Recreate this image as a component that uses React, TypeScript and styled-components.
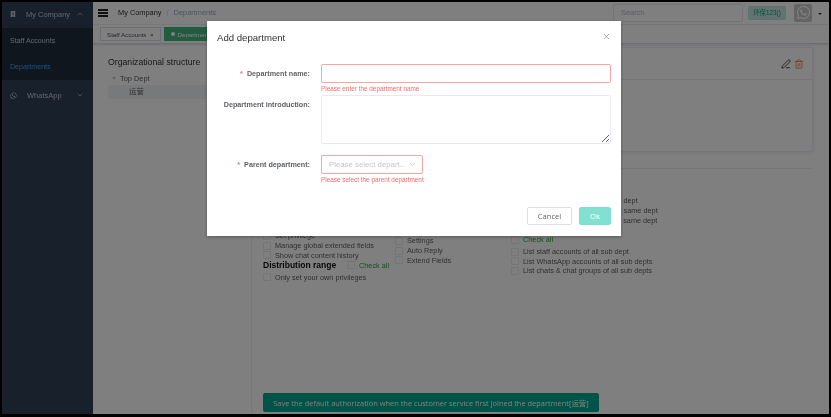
import React from 'react';
import styled, { createGlobalStyle } from 'styled-components';
import { ChevronDown, ChevronUp, PenLine, Trash2, X } from 'lucide-react';
import { FaWhatsapp, FaBuilding } from 'react-icons/fa';

const GlobalStyle = createGlobalStyle`
  html, body {
    margin: 0;
    height: 100%;
    background: #000;
    overflow: hidden;
  }
  #root {
    height: 100%;
  }
  * {
    box-sizing: border-box;
  }
`;

const Frame = styled.div`
  position: relative;
  margin: 2px 2px 0 2px;
  width: 827px;
  height: 412px;
  display: flex;
  background: #fff;
  font-family: 'Liberation Sans', Arial, sans-serif;
  color: #606266;
  overflow: hidden;
  filter: blur(0.5px);
`;

const Sidebar = styled.aside`
  width: 91px;
  flex: none;
  background: #304156;
  color: #bfcbd9;
  font-size: 7.5px;
`;

const MenuTitle = styled.div<{ $gap?: number }>`
  height: 26px;
  display: flex;
  align-items: center;
  padding: 0 9px 2px 8px;
  gap: 6px;
  margin-top: ${p => p.$gap || 0}px;
  white-space: nowrap;
  & > span {
    flex: 1;
    padding-left: 4px;
  }
`;

const SubMenu = styled.div`
  background: #1f2d3d;
`;

const SubItem = styled.div<{ $active?: boolean }>`
  height: 26px;
  line-height: 27px;
  padding-left: 8px;
  font-size: 7.1px;
  color: ${p => (p.$active ? '#409eff' : '#bfcbd9')};
`;

const Main = styled.div`
  flex: 1;
  min-width: 0;
  display: flex;
  flex-direction: column;
`;

const TopBar = styled.header`
  height: 23px;
  flex: none;
  display: flex;
  align-items: center;
  padding: 0 7px 1px 5px;
  border-bottom: 1px solid #eee;
`;

const Hamburger = styled.div`
  width: 10px;
  height: 8px;
  margin-right: 10px;
  border-top: 2px solid #222;
  border-bottom: 2px solid #222;
  position: relative;
  &::after {
    content: '';
    position: absolute;
    left: 0;
    right: 0;
    top: 1px;
    height: 2px;
    background: #222;
  }
`;

const Crumb = styled.span<{ $muted?: boolean }>`
  font-size: 7.4px;
  color: ${p => (p.$muted ? '#97a8be' : '#303133')};
`;

const CrumbSlash = styled.span`
  margin: 0 5px;
  font-size: 7.4px;
  color: #c0c4cc;
`;

const TopRight = styled.div`
  margin-left: auto;
  display: flex;
  align-items: center;
`;

const Search = styled.div`
  width: 130px;
  height: 18px;
  border: 1px solid #e4e7ed;
  border-radius: 2px;
  padding-left: 7px;
  line-height: 16px;
  font-size: 7.4px;
  color: #b8bcc4;
`;

const Badge = styled.div`
  width: 38px;
  height: 14px;
  margin-left: 5px;
  border-radius: 2px;
  background: #c8e6df;
  border: 1px solid #bfe3da;
  color: #00a58c;
  font-size: 6.4px;
  line-height: 12px;
  text-align: center;
  font-family: 'Liberation Sans', 'Noto Sans CJK SC', sans-serif;
`;

const Avatar = styled.div`
  width: 18px;
  height: 18px;
  margin-left: 8px;
  border-radius: 2px;
  background: #c8c8c8;
  color: #fff;
  display: flex;
  align-items: center;
  justify-content: center;
`;

const Caret = styled.div`
  margin-left: 6px;
  margin-top: 2px;
  border-left: 2px solid transparent;
  border-right: 2px solid transparent;
  border-top: 2px solid #333;
`;

const TagBar = styled.nav`
  height: 19px;
  flex: none;
  display: flex;
  align-items: center;
  gap: 3px;
  padding: 0 0 0 7px;
  border-bottom: 1px solid #d8dce5;
  box-shadow: 0 1px 2px rgba(0, 0, 0, 0.12);
`;

const Tag = styled.div<{ $active?: boolean }>`
  height: 14px;
  display: flex;
  align-items: center;
  gap: 3px;
  padding: 0 6px;
  font-size: 6.2px;
  border: 1px solid ${p => (p.$active ? '#42b983' : '#d8dce5')};
  background: ${p => (p.$active ? '#42b983' : '#fff')};
  color: ${p => (p.$active ? '#fff' : '#495060')};
  white-space: nowrap;
`;

const TagDot = styled.i`
  width: 4px;
  height: 4px;
  border-radius: 50%;
  background: #fff;
`;

const Content = styled.div`
  flex: 1;
  min-height: 0;
  display: flex;
  padding: 3px 16px 0 4px;
`;

const TreePanel = styled.section`
  width: 155px;
  flex: none;
  padding: 9px 0 0 11px;
  border-right: 1px solid #ebeef5;
`;

const TreeTitle = styled.h2`
  margin: 0 0 4px;
  font-size: 8.7px;
  line-height: 12px;
  font-weight: 400;
  color: #303133;
`;

const TreeNode = styled.div`
  display: flex;
  align-items: center;
  gap: 4px;
  height: 12px;
  padding-left: 4px;
  font-size: 7.4px;
`;

const TreeArrow = styled.i`
  border-left: 2px solid transparent;
  border-right: 2px solid transparent;
  border-top: 3px solid #c0c4cc;
`;

const TreeLeaf = styled.div`
  height: 14px;
  line-height: 14px;
  margin-top: 1px;
  padding-left: 21px;
  background: #f0f2f5;
  font-size: 7.4px;
  font-family: 'Liberation Sans', 'Noto Sans CJK SC', sans-serif;
`;

const RightPanel = styled.section`
  flex: 1;
  min-width: 0;
  display: flex;
  flex-direction: column;
`;

const InfoCard = styled.div`
  height: 105px;
  flex: none;
  border: 1px solid #ebeef5;
  box-shadow: 0 1px 4px rgba(0, 0, 0, 0.08);
`;

const InfoHead = styled.div`
  height: 32px;
  display: flex;
  align-items: center;
  justify-content: flex-end;
  gap: 3px;
  padding-right: 8px;
  border-bottom: 1px solid #ebeef5;
`;

const Privileges = styled.div`
  margin-top: 16px;
  border-top: 1px solid #ebeef5;
  padding: 27px 0 0 11px;
  display: grid;
  grid-template-columns: 132px 116px 1fr;
  font-size: 7.3px;
  color: #606266;
`;

const Column = styled.div<{ $top: number }>`
  padding-top: ${p => p.$top}px;
`;

const CheckRow = styled.label<{ $gap?: number }>`
  height: 9.7px;
  margin-top: ${p => p.$gap || 0}px;
  display: flex;
  align-items: center;
  gap: 4px;
  white-space: nowrap;
`;

const Box = styled.i`
  width: 8px;
  height: 8px;
  flex: none;
  border: 1px solid #eaeaea;
  border-radius: 1px;
  background: #fff;
`;

const CheckAll = styled.span`
  color: #2f9e44;
`;

const RangeHead = styled.div`
  height: 10px;
  display: flex;
  align-items: center;
  gap: 4px;
  white-space: nowrap;
  & > b {
    width: 80px;
    font-size: 8.5px;
    color: #111;
  }
`;

const SaveButton = styled.button`
  margin: auto 0 2px 11px;
  width: 336px;
  height: 19px;
  flex: none;
  border: 0;
  border-radius: 2px;
  padding: 0;
  background: #00a88e;
  color: #fff;
  font-size: 7.4px;
  letter-spacing: 0.03px;
  font-family: 'Open Sans', 'Noto Sans CJK SC', sans-serif;
  white-space: nowrap;
`;

const Overlay = styled.div`
  position: absolute;
  inset: 0;
  background: rgba(0, 0, 0, 0.5);
`;

const Modal = styled.div`
  position: absolute;
  left: 205px;
  top: 19px;
  width: 414px;
  height: 215px;
  background: #fff;
  box-shadow: 0 1px 3px rgba(0, 0, 0, 0.3);
  display: flex;
  flex-direction: column;
`;

const ModalHead = styled.div`
  height: 43px;
  flex: none;
  display: flex;
  align-items: flex-start;
  justify-content: space-between;
  padding: 11px 10px 0 10px;
  color: #303133;
  & > h3 {
    margin: 0;
    font-size: 9.6px;
    line-height: 12px;
    font-weight: 400;
  }
  & > svg {
    color: #909399;
  }
`;

const Form = styled.form`
  flex: 1;
  padding-right: 10px;
`;

const FormRow = styled.div<{ $gap?: number }>`
  display: flex;
  margin-top: ${p => p.$gap || 0}px;
`;

const Label = styled.label`
  width: 103px;
  flex: none;
  margin-right: 11px;
  height: 19px;
  line-height: 19px;
  text-align: right;
  font-size: 7.2px;
  font-weight: 700;
  color: #606266;
  white-space: nowrap;
  & > em {
    font-style: normal;
    color: #f56c6c;
    margin-right: 2px;
  }
`;

const Field = styled.div`
  flex: 1;
  min-width: 0;
`;

const NameInput = styled.input`
  display: block;
  width: 100%;
  height: 19px;
  border: 1.5px solid #f8a5a5;
  border-radius: 2px;
  outline: none;
`;

const IntroInput = styled.textarea`
  display: block;
  width: 100%;
  height: 49px;
  margin: 0;
  border: 1px solid #e8e8f2;
  border-radius: 2px;
  outline: none;
`;

const SelectBox = styled.div`
  width: 102px;
  height: 19px;
  display: flex;
  align-items: center;
  justify-content: space-between;
  padding: 0 5px 0 7px;
  border: 1.5px solid #f8a5a5;
  border-radius: 2px;
  font-size: 7.8px;
  color: #c0c4cc;
  white-space: nowrap;
`;

const ErrorText = styled.div`
  height: 10px;
  line-height: 12px;
  font-size: 6.4px;
  color: #f56c6c;
`;

const ModalFoot = styled.div`
  display: flex;
  justify-content: flex-end;
  gap: 7px;
  padding: 0 10px 11px 0;
`;

const FootButton = styled.button<{ $primary?: boolean }>`
  height: 18px;
  width: ${p => (p.$primary ? 32 : 45)}px;
  padding: 0;
  border-radius: 2px;
  border: 1px solid ${p => (p.$primary ? '#80e0d2' : '#dcdfe6')};
  background: ${p => (p.$primary ? '#80e0d2' : '#fff')};
  color: ${p => (p.$primary ? '#fff' : '#606266')};
  font-size: 7.6px;
  font-family: 'Open Sans', sans-serif;
`;

const Check = ({ children, gap }: { children: React.ReactNode; gap?: number }) => (
  <CheckRow $gap={gap}>
    <Box />
    {children}
  </CheckRow>
);

export default function App() {
  return (
    <>
      <GlobalStyle />
      <Frame>
        <Sidebar>
          <MenuTitle>
            <FaBuilding size={6} />
            <span>My Company</span>
            <ChevronUp size={8} />
          </MenuTitle>
          <SubMenu>
            <SubItem>Staff Accounts</SubItem>
            <SubItem $active>Departments</SubItem>
          </SubMenu>
          <MenuTitle $gap={3}>
            <FaWhatsapp size={7} />
            <span>WhatsApp</span>
            <ChevronDown size={8} />
          </MenuTitle>
        </Sidebar>
        <Main>
          <TopBar>
            <Hamburger />
            <Crumb>My Company</Crumb>
            <CrumbSlash>/</CrumbSlash>
            <Crumb $muted>Departments</Crumb>
            <TopRight>
              <Search>Search</Search>
              <Badge>环保123()</Badge>
              <Avatar>
                <FaWhatsapp size={15} />
              </Avatar>
              <Caret />
            </TopRight>
          </TopBar>
          <TagBar>
            <Tag>Staff Accounts &nbsp;×</Tag>
            <Tag $active>
              <TagDot />
              Departments
            </Tag>
          </TagBar>
          <Content>
            <TreePanel>
              <TreeTitle>Organizational structure</TreeTitle>
              <TreeNode>
                <TreeArrow />
                Top Dept
              </TreeNode>
              <TreeLeaf>运营</TreeLeaf>
            </TreePanel>
            <RightPanel>
              <InfoCard>
                <InfoHead>
                  <PenLine size={10} color="#333" />
                  <Trash2 size={10} color="#ff6a6a" />
                </InfoHead>
              </InfoCard>
              <Privileges>
                <Column $top={35}>
                  <Check>Set privilege</Check>
                  <Check>Manage global extended fields</Check>
                  <Check>Show chat content history</Check>
                  <RangeHead>
                    <b>Distribution range</b>
                    <Box />
                    <CheckAll>Check all</CheckAll>
                  </RangeHead>
                  <Check gap={2.5}>Only set your own privileges</Check>
                </Column>
                <Column $top={40}>
                  <Check>Settings</Check>
                  <Check>Auto Reply</Check>
                  <Check>Extend Fields</Check>
                </Column>
                <Column $top={0}>
                  <Check>List staff accounts of the same dept</Check>
                  <Check>List WhatsApp accounts of the same dept</Check>
                  <Check>List chats &amp; chat groups of the same dept</Check>
                  <Check gap={10}>
                    <CheckAll>Check all</CheckAll>
                  </Check>
                  <Check gap={2}>List staff accounts of all sub dept</Check>
                  <Check>List WhatsApp accounts of all sub depts</Check>
                  <Check>List chats &amp; chat groups of all sub depts</Check>
                </Column>
              </Privileges>
              <SaveButton>
                Save the default authorization when the customer service first joined the department[运营]
              </SaveButton>
            </RightPanel>
          </Content>
        </Main>
        <Overlay>
          <Modal>
            <ModalHead>
              <h3>Add department</h3>
              <X size={9} />
            </ModalHead>
            <Form>
              <FormRow>
                <Label>
                  <em>*</em> Department name:
                </Label>
                <Field>
                  <NameInput />
                  <ErrorText>Please enter the department name</ErrorText>
                </Field>
              </FormRow>
              <FormRow $gap={2}>
                <Label>Department introduction:</Label>
                <Field>
                  <IntroInput />
                </Field>
              </FormRow>
              <FormRow $gap={11}>
                <Label>
                  <em>*</em> Parent department:
                </Label>
                <Field>
                  <SelectBox>
                    Please select depart...
                    <ChevronDown size={9} />
                  </SelectBox>
                  <ErrorText>Please select the parent department</ErrorText>
                </Field>
              </FormRow>
            </Form>
            <ModalFoot>
              <FootButton type="button">Cancel</FootButton>
              <FootButton type="button" $primary>
                Ok
              </FootButton>
            </ModalFoot>
          </Modal>
        </Overlay>
      </Frame>
    </>
  );
}
